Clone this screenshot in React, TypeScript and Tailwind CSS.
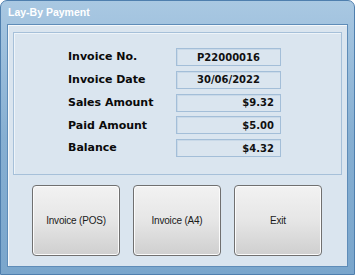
const rows = [
  { label: "Invoice No.", value: "P22000016", align: "center" },
  { label: "Invoice Date", value: "30/06/2022", align: "center" },
  { label: "Sales Amount", value: "$9.32", align: "right" },
  { label: "Paid Amount", value: "$5.00", align: "right" },
  { label: "Balance", value: "$4.32", align: "right" },
];

const buttons = ["Invoice (POS)", "Invoice (A4)", "Exit"];

export default function App() {
  return (
    <div className="flex h-[275px] w-[355px] flex-col overflow-hidden rounded-t-[7px] border border-[#4f7fae] bg-gradient-to-b from-[#a9c8e2] via-[#86afd2] to-[#7aa6cc] px-[6px] pb-[7px]">
      <div
        className="flex h-[23px] items-center pl-[1px] pt-[1px] text-[10.5px] font-bold text-white"
        style={{ fontFamily: '"Liberation Sans", Arial, sans-serif' }}
      >
        Lay-By Payment
      </div>
      <div className="flex flex-1 flex-col border border-[#5e8cb8] bg-[#dae5ef] px-[5px] pt-[7px] shadow-[inset_1px_1px_0_#f4f8fb]">
        <div className="flex h-[143px] flex-col gap-[4.75px] border border-[#a6c0d9] pt-[15px] shadow-[inset_1px_1px_0_#eef4f9]">
          {rows.map((r) => (
            <div key={r.label} className="flex h-[18px] items-center">
              <div
                className="ml-[54px] w-[108px] pt-[1px] text-[11px] font-bold text-[#0a0a0a]"
                style={{ fontFamily: '"DejaVu Sans", Verdana, sans-serif' }}
              >
                {r.label}
              </div>
              <div
                className={
                  "flex h-[18px] w-[105px] items-center border border-[#a3bed8] px-[6px] text-[10px] font-bold text-[#111] shadow-[inset_1px_1px_0_#c9d9e8] " +
                  (r.align === "center" ? "justify-center" : "justify-end")
                }
                style={{ fontFamily: '"DejaVu Sans", Verdana, sans-serif' }}
              >
                {r.value}
              </div>
            </div>
          ))}
        </div>
        <div className="mt-[10px] flex gap-[13px] pl-[19px]">
          {buttons.map((b) => (
            <div
              key={b}
              className="flex h-[71px] w-[88px] items-center justify-center rounded-[4px] border border-[#707070] bg-gradient-to-b from-[#f2f2f2] via-[#e6e6e6] to-[#cfcfcf] text-[10px] tracking-[-0.2px] text-[#1a1a1a] shadow-[inset_0_0_0_1px_#fbfbfb]"
              style={{ fontFamily: '"Liberation Sans", Arial, sans-serif' }}
            >
              {b}
            </div>
          ))}
        </div>
      </div>
    </div>
  );
}
